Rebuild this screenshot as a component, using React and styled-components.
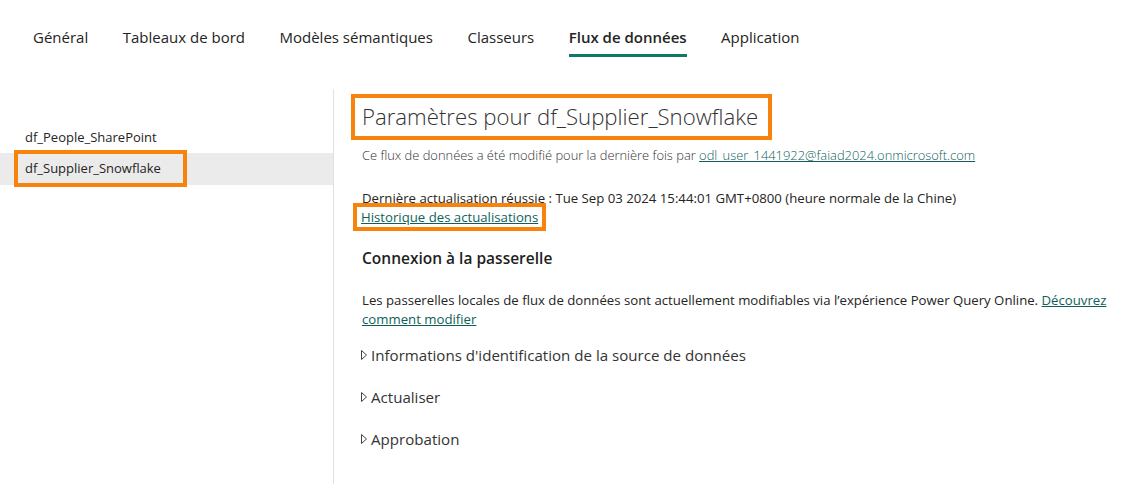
import styled, { createGlobalStyle } from 'styled-components';

const GlobalStyle = createGlobalStyle`
    body {
        margin: 0;
        background: #FFFFFF;
        font-family: "Open Sans", "Noto Sans", sans-serif;
        color: #252423;
    }
`;

const tabs = ['Général', 'Tableaux de bord', 'Modèles sémantiques', 'Classeurs', 'Flux de données', 'Application'];
const dataflows = ['df_People_SharePoint', 'df_Supplier_Snowflake'];
const sections = ["Informations d'identification de la source de données", 'Actualiser', 'Approbation'];

const App = () => {
    return (
        <Page>
            <GlobalStyle />
            <TabBar>
                {tabs.map((t) => (
                    <Tab key={t} active={t === 'Flux de données'}>{t}</Tab>
                ))}
            </TabBar>

            <Body>
                <Sidebar>
                    {dataflows.map((d) => (
                        <SideItem key={d} selected={d === 'df_Supplier_Snowflake'}>
                            {d === 'df_Supplier_Snowflake' ? <Highlight>{d}</Highlight> : d}
                        </SideItem>
                    ))}
                </Sidebar>

                <Main>
                    <TitleBox>Paramètres pour df_Supplier_Snowflake</TitleBox>
                    <Meta>
                        Ce flux de données a été modifié pour la dernière fois par <Link>odl_user_1441922@faiad2024.onmicrosoft.com</Link>
                    </Meta>

                    <Refresh>Dernière actualisation réussie : Tue Sep 03 2024 15:44:01 GMT+0800 (heure normale de la Chine)</Refresh>
                    <HistoryBox><Link>Historique des actualisations</Link></HistoryBox>

                    <SectionTitle>Connexion à la passerelle</SectionTitle>
                    <Paragraph>
                        Les passerelles locales de flux de données sont actuellement modifiables via l’expérience Power Query Online. <Link>Découvrez comment modifier</Link>
                    </Paragraph>

                    <Collapsibles>
                        {sections.map((s) => (
                            <Collapsible key={s}>
                                <Caret viewBox="0 0 8 12" aria-hidden="true">
                                    <path d="M1.5 1.5 L6.5 6 L1.5 10.5 Z" fill="none" stroke="#444" strokeWidth="1" strokeLinejoin="round" />
                                </Caret>
                                {s}
                            </Collapsible>
                        ))}
                    </Collapsibles>
                </Main>
            </Body>
        </Page>
    );
};

export default App;

const Page = styled.div`
    width: 1142px;
    height: 484px;
    overflow: hidden;
    display: flex;
    flex-direction: column;
`;

const TabBar = styled.nav`
    display: flex;
    gap: 34.5px;
    padding: 27px 0 0 33px;
    height: 62px;
    box-sizing: border-box;
`;

const Tab = styled.div`
    font-size: 15px;
    line-height: 21px;
    height: 30px;
    box-sizing: border-box;
    color: #252423;
    font-weight: ${(p) => (p.active ? 600 : 400)};
    border-bottom: 3px solid ${(p) => (p.active ? '#117865' : 'transparent')};
    white-space: nowrap;
`;

const Body = styled.div`
    display: flex;
    flex: 1;
    margin-top: 27px;
`;

const Sidebar = styled.aside`
    width: 334px;
    border-right: 1px solid #E1E1E1;
    padding-top: 32px;
    box-sizing: border-box;
`;

const SideItem = styled.div`
    height: 32px;
    display: flex;
    align-items: center;
    padding-left: 25px;
    font-size: 13px;
    color: #252423;
    background: ${(p) => (p.selected ? '#EBEBEB' : 'transparent')};
`;

const Highlight = styled.span`
    display: inline-block;
    line-height: 19px;
    border: 4px solid #F7820C;
    margin: -1px 0 0 -11px;
    padding: 5px 22px 5px 7px;
`;

const Main = styled.main`
    flex: 1;
    padding: 5px 0 0 28px;
    display: flex;
    flex-direction: column;
    align-items: flex-start;
`;

const TitleBox = styled.h1`
    margin: 0 0 0 -11px;
    border: 4px solid #F7820C;
    padding: 3px 10px 4px 7px;
    font-size: 22.2px;
    line-height: 31px;
    font-weight: 300;
    color: #333333;
    white-space: nowrap;
`;

const Meta = styled.p`
    margin: 7px 0 0;
    font-size: 12.9px;
    line-height: 16px;
    font-weight: 300;
    color: #333333;
`;

const Link = styled.a`
    color: #0E5F5A;
    text-decoration: underline;
    cursor: pointer;
`;

const Refresh = styled.p`
    margin: 26px 0 0;
    font-size: 13.2px;
    line-height: 18px;
    color: #252423;
`;

const HistoryBox = styled.div`
    margin: -4px 0 0 -9px;
    border: 4px solid #F7820C;
    padding: 0 4px;
    font-size: 13.2px;
    line-height: 20px;
`;

const SectionTitle = styled.h2`
    margin: 17px 0 0;
    font-size: 15.5px;
    line-height: 20px;
    font-weight: 600;
    color: #1F1F1F;
`;

const Paragraph = styled.p`
    margin: 23px 0 0;
    max-width: 752px;
    font-size: 13.2px;
    line-height: 19px;
    color: #252423;
`;

const Collapsibles = styled.div`
    display: flex;
    flex-direction: column;
    gap: 22px;
    margin-top: 16px;
`;

const Collapsible = styled.div`
    display: flex;
    align-items: center;
    margin-left: -2px;
    font-size: 15.1px;
    line-height: 20px;
    color: #333333;
`;

const Caret = styled.svg`
    width: 8px;
    height: 12px;
    margin-right: 3px;
`;
